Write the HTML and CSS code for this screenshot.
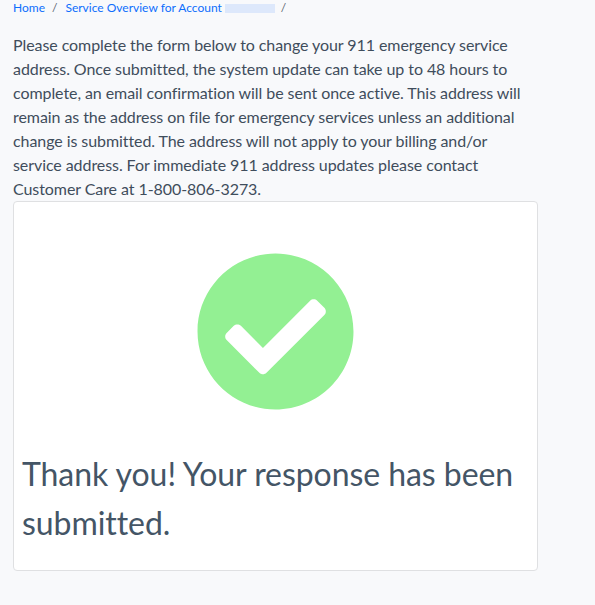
FILE: index.html
```html
<!DOCTYPE html>
<html lang="en">
<head>
<meta charset="utf-8">
<title>911 Address</title>
<link rel="stylesheet" href="styles.css">
</head>
<body>
<nav class="crumbs">
  <a href="#">Home</a><span class="sep">/</span>
  <a href="#">Service Overview for Account</a><span class="mask"></span><span class="sep last">/</span>
</nav>
<main class="content">
  <p class="intro">Please complete the form below to change your 911 emergency service address. Once submitted, the system update can take up to 48 hours to complete, an email confirmation will be sent once active. This address will remain as the address on file for emergency services unless an additional change is submitted. The address will not apply to your billing and/or service address. For immediate 911 address updates please contact Customer Care at 1-800-806-3273.</p>
  <section class="card">
    <div class="icon-wrap">
      <svg class="check" viewBox="0 0 512 512" aria-hidden="true"><path d="M504 256c0 136.967-111.033 248-248 248S8 392.967 8 256 119.033 8 256 8s248 111.033 248 248zM227.314 387.314l184-184c6.248-6.248 6.248-16.379 0-22.627l-22.627-22.627c-6.248-6.249-16.379-6.249-22.628 0L216 308.118l-70.059-70.059c-6.248-6.248-16.379-6.248-22.628 0l-22.627 22.627c-6.248 6.248-6.248 16.379 0 22.627l104 104c6.249 6.249 16.379 6.249 22.628 0z"/></svg>
    </div>
    <h1 class="thanks">Thank you! Your response has been submitted.</h1>
  </section>
</main>
</body>
</html>
```
FILE: styles.css
```css
* { box-sizing: border-box; }
html, body { margin: 0; height: 100%; }
body {
  background: #f8f9fb;
  color: #3f4d5c;
  font-family: Lato, "Open Sans", sans-serif;
  font-size: 16px;
  line-height: 24px;
  overflow: hidden;
}
.crumbs {
  display: flex;
  align-items: center;
  height: 16px;
  padding-left: 13px;
  font-size: 12px;
  line-height: 16px;
}
.crumbs a { color: #0d6efd; text-decoration: none; }
.sep { color: #5c6670; margin: 0 8px 0 7px; }
.sep.last { margin: 0 0 0 6px; }
.mask {
  display: inline-block;
  width: 50px;
  height: 9px;
  margin-left: 3px;
  background: #dde8fb;
}
.content { width: 538px; padding: 17px 0 0 13px; }
.intro { margin: 0; padding-right: 8px; letter-spacing: -0.075px; }
.card {
  background: #fff;
  border: 1px solid #dfe0e2;
  border-radius: 4px;
  height: 370px;
  padding: 49px 8px 0;
}
.icon-wrap { display: flex; justify-content: center; }
.check { width: 161px; height: 161px; fill: #93f093; display: block; }
.thanks {
  margin: 37px 0 0;
  font-size: 32px;
  font-weight: 400;
  line-height: 49px;
  letter-spacing: -0.06px;
  color: #445566;
}
```
